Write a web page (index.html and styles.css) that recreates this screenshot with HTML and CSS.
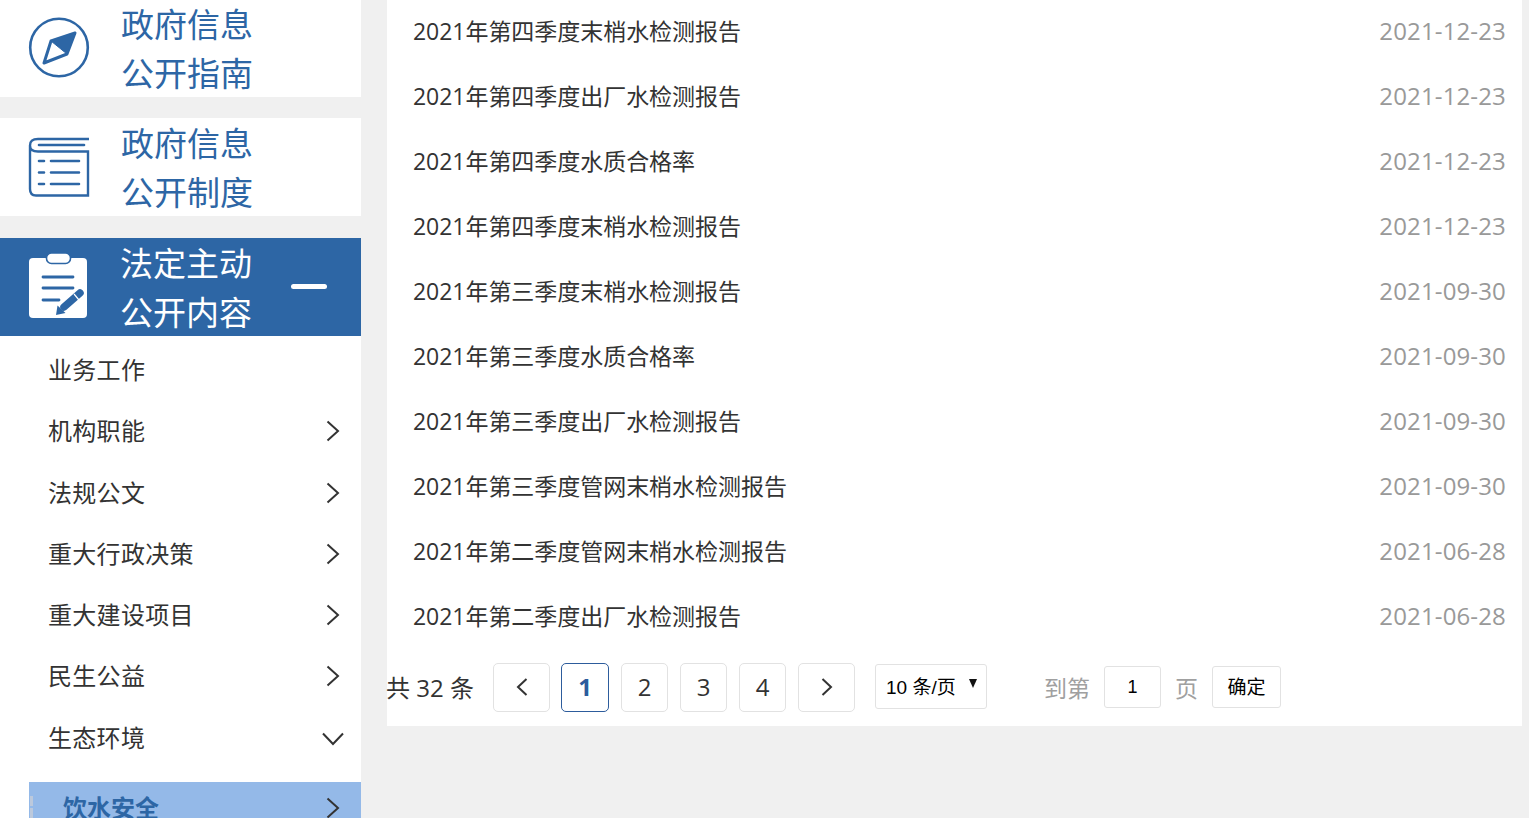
FILE: index.html
```html
<!DOCTYPE html>
<html lang="zh-CN">
<head>
    <meta charset="UTF-8">
    <title>法定主动公开内容</title>
    <link rel="stylesheet" href="styles.css">
</head>
<body>
<div class="page">
    <aside class="sidebar">
        <div class="cat cat-first">
            <svg class="cat-icon" viewBox="0 0 60 60" width="60" height="60">
                <circle cx="30" cy="29.500" r="28.800" fill="none" stroke="#2d66a5" stroke-width="2.600"/>
                <path d="M46 15 L22 23 L15 45 L38 36 Z" fill="#fff" stroke="#2d66a5" stroke-width="3" stroke-linejoin="round"/>
                <path d="M46 15 L22 23 L38 36 Z" fill="#2d66a5" stroke="#2d66a5" stroke-width="1"/>
            </svg>
            <div class="cat-title">政府信息<br>公开指南</div>
        </div>
        <div class="cat">
            <svg class="cat-icon" viewBox="0 0 60 60" width="60" height="60">
                <path d="M60 2 H9 Q1 2 1 8.500 V52 Q1 58.500 7 58.500 H59 V14.500 H9 Q1 14.500 1 8.500" fill="none" stroke="#2d66a5" stroke-width="2.400"/>
                <path d="M10 8 H55" stroke="#2d66a5" stroke-width="2.600" stroke-linecap="round"/>
                <path d="M10 24 H15 M22 24 H50 M10 35.500 H15 M22 35.500 H50 M10 47 H15 M22 47 H50" stroke="#2d66a5" stroke-width="2.600" stroke-linecap="round"/>
            </svg>
            <div class="cat-title">政府信息<br>公开制度</div>
        </div>
        <div class="cat cat-active">
            <svg class="cat-icon" viewBox="0 0 58 66" width="58" height="66">
                <rect x="0" y="4" width="58" height="60" rx="4" fill="#fff"/>
                <rect x="17.500" y="-1" width="24" height="10.500" rx="5" fill="#fff" stroke="#2d66a5" stroke-width="1.600"/>
                <path d="M14 23 H44 M14 34 H44 M14 46 H30" stroke="#2d66a5" stroke-width="2.800" stroke-linecap="round"/>
                <path d="M35 53 L51 39" stroke="#2d66a5" stroke-width="7.500" stroke-linecap="round"/>
                <path d="M27 61 L28.500 51.500 L36.500 59 Z" fill="#2d66a5"/>
                <path d="M45 40 L50 46" stroke="#fff" stroke-width="1.200"/>
            </svg>
            <div class="cat-title">法定主动<br>公开内容</div>
            <span class="cat-minus"></span>
        </div>
        <ul class="sub-list">
            <li class="sub-item">业务工作</li>
            <li class="sub-item">机构职能
                <svg class="chev" viewBox="0 0 14 22" width="14" height="22"><path d="M1.5 1.5 L12 11 L1.5 20.5" fill="none" stroke="#333" stroke-width="2"/></svg>
            </li>
            <li class="sub-item">法规公文
                <svg class="chev" viewBox="0 0 14 22" width="14" height="22"><path d="M1.5 1.5 L12 11 L1.5 20.5" fill="none" stroke="#333" stroke-width="2"/></svg>
            </li>
            <li class="sub-item">重大行政决策
                <svg class="chev" viewBox="0 0 14 22" width="14" height="22"><path d="M1.5 1.5 L12 11 L1.5 20.5" fill="none" stroke="#333" stroke-width="2"/></svg>
            </li>
            <li class="sub-item">重大建设项目
                <svg class="chev" viewBox="0 0 14 22" width="14" height="22"><path d="M1.5 1.5 L12 11 L1.5 20.5" fill="none" stroke="#333" stroke-width="2"/></svg>
            </li>
            <li class="sub-item">民生公益
                <svg class="chev" viewBox="0 0 14 22" width="14" height="22"><path d="M1.5 1.5 L12 11 L1.5 20.5" fill="none" stroke="#333" stroke-width="2"/></svg>
            </li>
            <li class="sub-item">生态环境
                <svg class="chev chev-down" viewBox="0 0 22 14" width="22" height="14"><path d="M1 1.5 L11 12 L21 1.5" fill="none" stroke="#333" stroke-width="2"/></svg>
            </li>
        </ul>
        <div class="sub-selected">饮水安全
            <svg class="chev" viewBox="0 0 14 22" width="14" height="22"><path d="M1.5 1.5 L12 11 L1.5 20.5" fill="none" stroke="#333" stroke-width="2"/></svg>
        </div>
    </aside>

    <main class="content">
        <ul class="news-list">
            <li class="news-row"><span>2021年第四季度末梢水检测报告</span><span class="news-date">2021-12-23</span></li>
            <li class="news-row"><span>2021年第四季度出厂水检测报告</span><span class="news-date">2021-12-23</span></li>
            <li class="news-row"><span>2021年第四季度水质合格率</span><span class="news-date">2021-12-23</span></li>
            <li class="news-row"><span>2021年第四季度末梢水检测报告</span><span class="news-date">2021-12-23</span></li>
            <li class="news-row"><span>2021年第三季度末梢水检测报告</span><span class="news-date">2021-09-30</span></li>
            <li class="news-row"><span>2021年第三季度水质合格率</span><span class="news-date">2021-09-30</span></li>
            <li class="news-row"><span>2021年第三季度出厂水检测报告</span><span class="news-date">2021-09-30</span></li>
            <li class="news-row"><span>2021年第三季度管网末梢水检测报告</span><span class="news-date">2021-09-30</span></li>
            <li class="news-row"><span>2021年第二季度管网末梢水检测报告</span><span class="news-date">2021-06-28</span></li>
            <li class="news-row"><span>2021年第二季度出厂水检测报告</span><span class="news-date">2021-06-28</span></li>
        </ul>
        <div class="pager">
            <span class="pager-total">共 32 条</span>
            <span class="page-btn page-arrow page-prev">
                <svg viewBox="0 0 12 18" width="12" height="18"><path d="M10.5 1 L2 9 L10.5 17" fill="none" stroke="#333" stroke-width="2"/></svg>
            </span>
            <span class="page-btn page-current">1</span>
            <span class="page-btn">2</span>
            <span class="page-btn">3</span>
            <span class="page-btn">4</span>
            <span class="page-btn page-arrow">
                <svg viewBox="0 0 12 18" width="12" height="18"><path d="M1.5 1 L10 9 L1.5 17" fill="none" stroke="#333" stroke-width="2"/></svg>
            </span>
            <span class="page-size">10 条/页<i class="page-size-arrow"></i></span>
            <span class="goto-label">到第</span>
            <span class="goto-input">1</span>
            <span class="goto-unit">页</span>
            <span class="goto-btn">确定</span>
        </div>
    </main>
</div>
</body>
</html>
```

FILE: styles.css
```css
* {
    box-sizing: border-box;
}
html, body {
    height: 100%;
}
body {
    margin: 0;
    overflow: hidden;
    background-color: #f0f0f0;
    font-family: "Open Sans", "Noto Sans CJK SC", sans-serif;
    color: #333;
}
ul {
    list-style: none;
    margin: 0;
    padding: 0;
}
.page {
    display: flex;
    align-items: flex-start;
    gap: 26px;
    height: 818px;
    overflow: hidden;
}
.sidebar {
    flex: none;
    width: 361px;
    height: 818px;
    background-color: #fff;
}
.cat {
    display: flex;
    align-items: center;
    height: 98px;
    margin-bottom: 22px;
    padding-left: 29px;
    background-color: #fff;
    position: relative;
}
.cat-first {
    margin-top: -1px;
    margin-bottom: 21px;
}
.cat-first::after,
.cat + .cat:not(.cat-active)::after {
    content: "";
    position: absolute;
    left: 0;
    right: 0;
    top: 98px;
    height: 22px;
    background-color: #f0f0f0;
}
.cat-first::after {
    height: 21px;
}
.cat-icon {
    flex: none;
    overflow: visible;
}
.cat-title {
    margin-left: 32px;
    padding-top: 2px;
    font-size: 33px;
    line-height: 49px;
    color: #2d66a5;
}
.cat-active {
    margin-bottom: 0;
    background-color: #2d66a5;
}
.cat-active .cat-title {
    margin-left: 33px;
    margin-right: 1px;
    color: #fff;
}
.cat-minus {
    width: 36px;
    height: 5px;
    margin-left: 38px;
    margin-top: -2px;
    border-radius: 3px;
    background-color: #fff;
}
.sub-list {
    padding-top: 3.3px;
}
.sub-item {
    display: flex;
    align-items: center;
    justify-content: space-between;
    height: 61.3px;
    padding: 0 21px 3px 48px;
    font-size: 24px;
    letter-spacing: 0.3px;
}
.chev {
    margin-top: 3px;
}
.chev-down {
    margin-top: 5px;
    margin-right: -4px;
}
.sub-selected {
    display: flex;
    align-items: center;
    justify-content: space-between;
    position: relative;
    height: 52px;
    margin: 13.7px 0 0 29px;
    padding: 0 21px 3px 34px;
    background-color: #94b9e8;
    color: #2d66a5;
    font-size: 24px;
    font-weight: 700;
}
.sub-selected::before {
    content: "";
    position: absolute;
    left: 1px;
    top: 14px;
    width: 3px;
    height: 22px;
    background: linear-gradient(#bcc9dc 45%, #94b9e8 45%, #94b9e8 55%, #bcc9dc 55%);
}
.content {
    flex: none;
    width: 1135px;
    background-color: #fff;
}
.news-row {
    display: flex;
    align-items: center;
    justify-content: space-between;
    height: 65px;
    padding: 0 16px 6px 26px;
    font-size: 23px;
    letter-spacing: -0.04px;
}
.news-date {
    margin-top: 1px;
    color: #999;
    font-size: 24px;
    letter-spacing: 0.15px;
}
.pager {
    display: flex;
    align-items: center;
    height: 76px;
    padding-bottom: 1px;
    font-size: 24px;
}
.pager-total {
    width: 106px;
    margin-left: -1px;
    margin-right: 1px;
    padding-bottom: 2px;
    white-space: nowrap;
}
.page-btn {
    display: flex;
    align-items: center;
    justify-content: center;
    width: 47px;
    height: 49px;
    margin-right: 12px;
    padding-bottom: 2px;
    border: 1px solid #e2e2e2;
    border-radius: 5px;
}
.page-arrow {
    width: 57px;
}
.page-prev {
    margin-right: 11px;
}
.page-current {
    width: 48px;
    border-color: #2d5c9c;
    color: #2d5c9c;
    font-weight: 700;
}
.page-size {
    display: flex;
    align-items: center;
    justify-content: space-between;
    width: 112px;
    height: 45px;
    margin-top: -2px;
    margin-left: 8px;
    padding: 0 9px 2px 10px;
    border: 1px solid #e2e2e2;
    border-radius: 3px;
    font-family: "Liberation Sans", "Noto Sans CJK SC", sans-serif;
    font-size: 19px;
    color: #000;
}
.page-size-arrow {
    width: 0;
    height: 0;
    margin-top: -5px;
    border-left: 4px solid transparent;
    border-right: 4px solid transparent;
    border-top: 9px solid #111;
}
.goto-label {
    margin-left: 57px;
    width: 60px;
    padding-bottom: 2px;
    font-size: 23px;
    color: #a0a0a0;
    white-space: nowrap;
}
.goto-input {
    width: 57px;
    height: 42px;
    margin-top: -2px;
    line-height: 40px;
    text-align: center;
    border: 1px solid #e2e2e2;
    border-radius: 3px;
    font-family: "Liberation Sans", sans-serif;
    font-size: 18px;
    color: #000;
}
.goto-unit {
    width: 51px;
    padding-left: 14px;
    padding-bottom: 2px;
    font-size: 23px;
    color: #a0a0a0;
}
.goto-btn {
    width: 69px;
    height: 42px;
    margin-top: -2px;
    line-height: 40px;
    text-align: center;
    border: 1px solid #e2e2e2;
    border-radius: 3px;
    font-size: 19px;
    color: #000;
}
```
